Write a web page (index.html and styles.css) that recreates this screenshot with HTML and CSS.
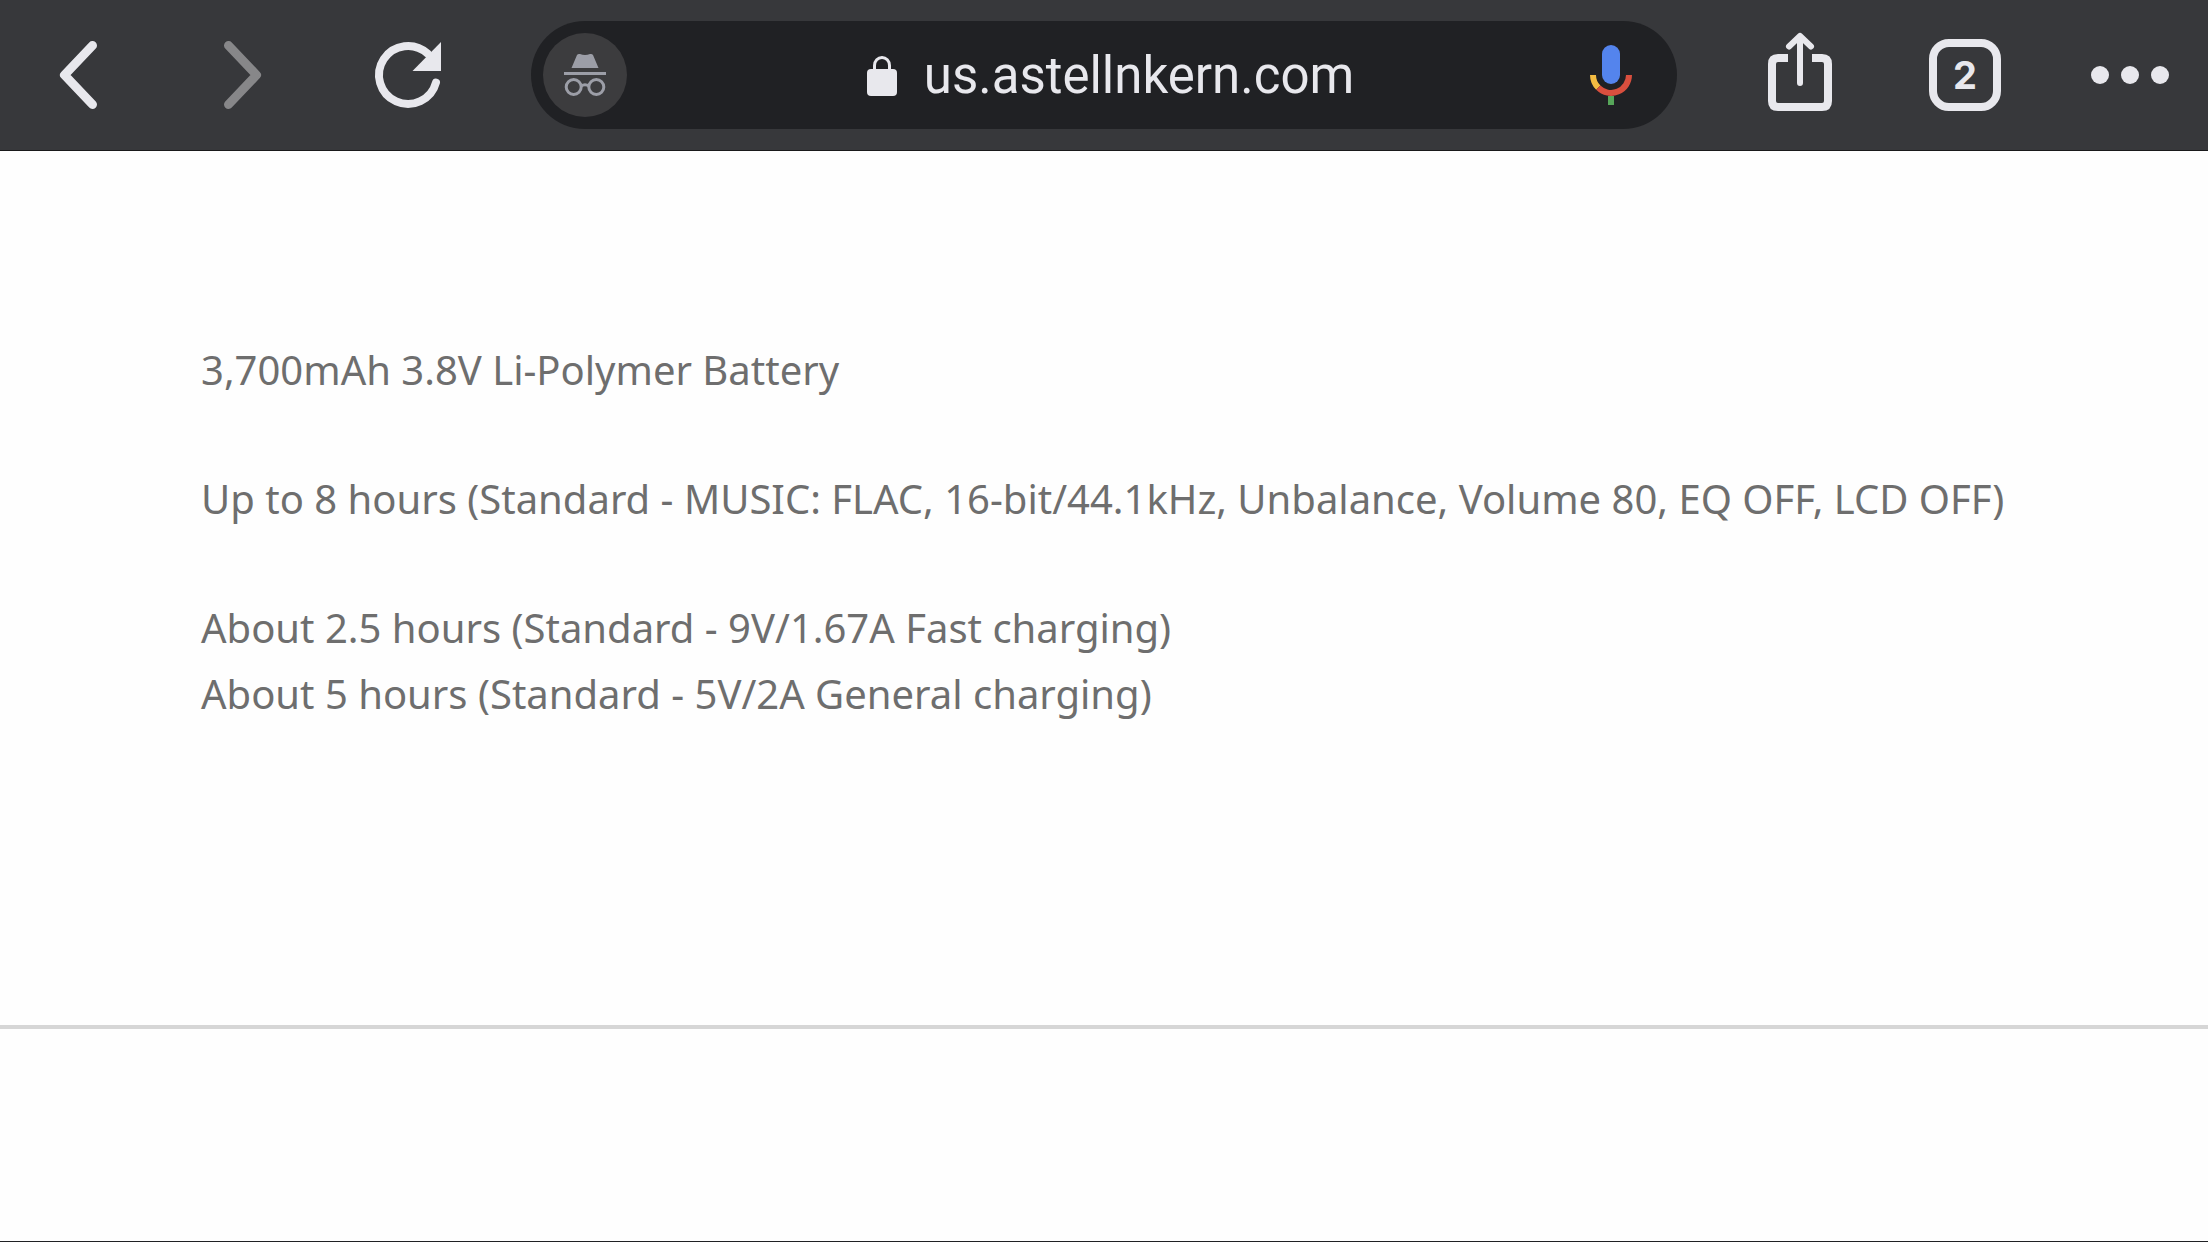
FILE: index.html
```html
<!DOCTYPE html>
<html lang="en">
<head>
<meta charset="utf-8">
<meta name="viewport" content="width=device-width, initial-scale=1">
<title>us.astellnkern.com</title>
<link rel="stylesheet" href="styles.css">
</head>
<body>
<header class="toolbar">
  <nav class="actions" aria-label="Navigation">
    <button class="action" type="button" aria-label="Back">
      <svg class="icon" viewBox="0 0 84 84"><path d="M56.500 12.500 28.500 42 56.500 71.500" fill="none" stroke="currentColor" stroke-width="9" stroke-linecap="round" stroke-linejoin="round"/></svg>
    </button>
    <button class="action" type="button" aria-label="Forward" disabled>
      <svg class="icon" viewBox="0 0 84 84"><path d="M27.500 12.500 55.500 42 27.500 71.500" fill="none" stroke="currentColor" stroke-width="9" stroke-linecap="round" stroke-linejoin="round"/></svg>
    </button>
    <button class="action" type="button" aria-label="Reload">
      <svg class="icon" viewBox="0 0 84 84"><path d="M70 49.500A29 29 0 1 1 61.500 20.500" fill="none" stroke="currentColor" stroke-width="8" stroke-linecap="round"/><path d="M75 9v29H46.500z" fill="currentColor"/></svg>
    </button>
  </nav>
  <form class="omnibox">
    <span class="incognito">
      <svg class="incognito-icon" viewBox="0 0 42 42" role="img" aria-label="Incognito"><path d="M13 1q1-1.500 3-1 5 2 10 0 2-.5 3 1l5.500 13h-27z" fill="currentColor"/><path d="M0 18h42v3H0z" fill="currentColor"/><g fill="none" stroke="currentColor" stroke-width="3"><circle cx="9.700" cy="33" r="7.500"/><circle cx="32.300" cy="33" r="7.500"/><path d="M17 32q4-2.500 8 0"/></g></svg>
    </span>
    <span class="address">
      <svg class="lock" viewBox="0 0 30 40" aria-hidden="true"><path d="M7.500 14V9.500a7.500 8 0 0 1 15 0V14" fill="none" stroke="currentColor" stroke-width="3"/><rect y="13" width="30" height="27" rx="4" fill="currentColor"/></svg>
      <input class="url" type="text" size="17" value="us.astellnkern.com" aria-label="Address">
    </span>
    <button class="mic" type="button" aria-label="Voice search">
      <svg class="mic-icon" viewBox="0 0 42 60"><rect x="12" width="18" height="39" rx="9" fill="#5484ed"/><g fill="none" stroke-width="6"><path d="M3 30a18 18 0 0 0 5.300 12.700" stroke="#f4bc42"/><path d="M8.300 42.700A18 18 0 0 0 39 30" stroke="#d94f3e"/></g><path d="M18 51h6v9h-6z" fill="#57a65a"/></svg>
    </button>
  </form>
  <div class="actions">
    <button class="action" type="button" aria-label="Share">
      <svg class="icon" viewBox="0 0 84 84"><g fill="none" stroke="currentColor" stroke-width="8"><path d="M30 25H20q-6 0-6 6v37q0 6 6 6h44q6 0 6-6V31q0-6-6-6H54"/><path d="M42 50V4M31 13.500 42 3l11 10.500" stroke-width="6" stroke-linecap="round" stroke-linejoin="round"/></g></svg>
    </button>
    <button class="action" type="button" aria-label="2 open tabs"><span class="tab-count">2</span></button>
    <button class="action" type="button" aria-label="Menu">
      <svg class="icon" viewBox="0 0 84 84"><g fill="currentColor"><circle cx="12" cy="42" r="9"/><circle cx="42" cy="42" r="9"/><circle cx="72" cy="42" r="9"/></g></svg>
    </button>
  </div>
</header>
<main class="page">
  <section class="specs">
    <p class="spec">3,700mAh 3.8V Li-Polymer Battery</p>
    <p class="spec">Up to 8 hours (Standard - MUSIC: FLAC, 16-bit/44.1kHz, Unbalance, Volume 80, EQ OFF, LCD OFF)</p>
    <p class="spec">About 2.5 hours (Standard - 9V/1.67A Fast charging)<br>About 5 hours (Standard - 5V/2A General charging)</p>
  </section>
</main>
</body>
</html>
```
FILE: styles.css
```css
* {
  box-sizing: border-box;
}

body {
  display: flex;
  flex-direction: column;
  min-height: 100vh;
  margin: 0;
  background: #fefefe;
  color: #6e6e6e;
  font-family: "Noto Sans", "Open Sans", sans-serif;
}

button {
  padding: 0;
  border: 0;
  background: none;
  color: inherit;
  font: inherit;
}

svg {
  display: block;
  overflow: visible;
}

.toolbar {
  display: flex;
  align-items: center;
  gap: 63px;
  padding: 21px 18px;
  border-bottom: 1px solid #19191b;
  background: #37383b;
  color: #e8e8ed;
  font-family: Inter, Roboto, sans-serif;
}

.actions {
  display: flex;
  gap: 45px;
}

.action {
  display: flex;
  align-items: center;
  justify-content: center;
  width: 120px;
  height: 108px;
}

.action:disabled {
  color: #878789;
}

.icon {
  width: 84px;
  height: 84px;
}

.tab-count {
  display: flex;
  align-items: center;
  justify-content: center;
  width: 72px;
  height: 72px;
  border: 8px solid currentColor;
  border-radius: 20px;
  font-size: 38px;
  font-weight: 700;
  line-height: 1;
}

.omnibox {
  display: flex;
  flex: 1;
  align-items: center;
  min-width: 0;
  height: 108px;
  padding: 0 45px 0 12px;
  border-radius: 54px;
  background: #202124;
}

.incognito {
  display: flex;
  align-items: center;
  justify-content: center;
  width: 84px;
  height: 84px;
  border-radius: 50%;
  background: #3c3c3e;
  color: #9c9ea7;
}

.incognito-icon {
  width: 42px;
  height: 42px;
}

.address {
  display: flex;
  flex: 1;
  align-items: center;
  justify-content: center;
  gap: 27px;
  min-width: 0;
  padding: 2px 0 0 4px;
}

.lock {
  flex: none;
  width: 30px;
  height: 40px;
}

.url {
  field-sizing: content;
  min-width: 0;
  padding: 0;
  border: 0;
  outline: 0;
  background: none;
  color: inherit;
  font-family: Roboto, Inter, sans-serif;
  font-size: 51px;
  line-height: 64px;
}

.mic-icon {
  width: 42px;
  height: 60px;
}

.page {
  flex: 1;
  border-bottom: 1px solid #202124;
}

.specs {
  display: flex;
  flex-direction: column;
  gap: 63px;
  padding: 186px 160px 298px 201px;
  border-bottom: 4px solid #d6d6d6;
}

.spec {
  margin: 0;
  font-size: 40px;
  line-height: 66px;
}
```
